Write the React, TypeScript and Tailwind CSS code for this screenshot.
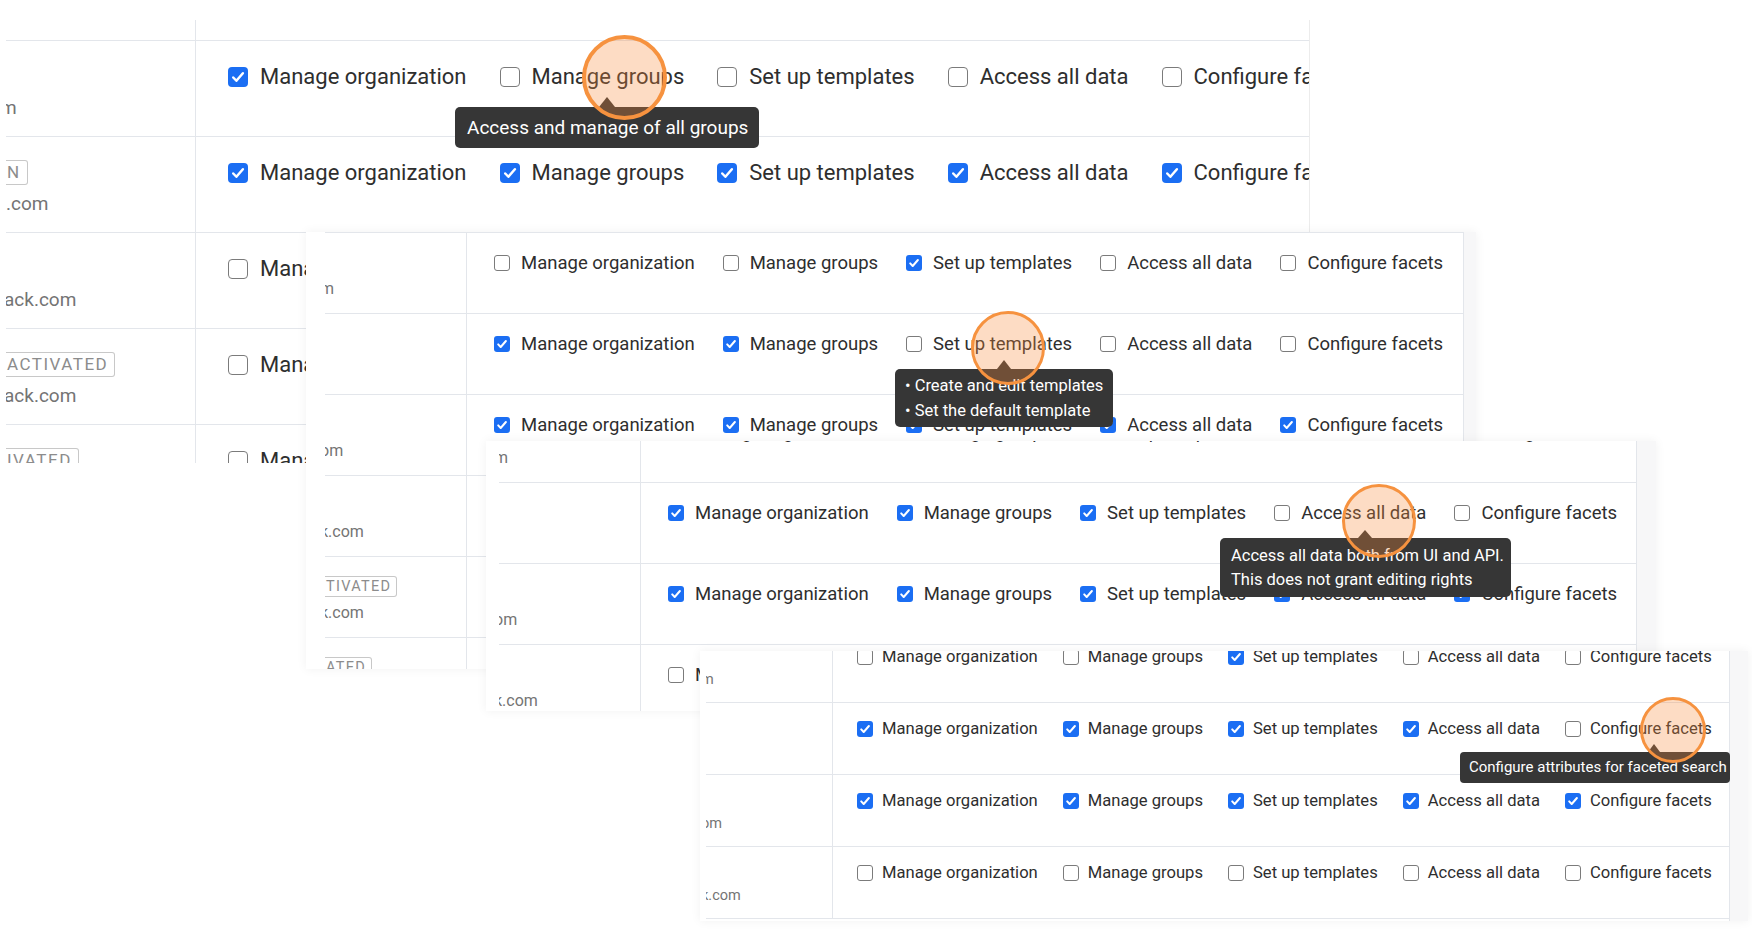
const LABELS = ['Manage organization', 'Manage groups', 'Set up templates', 'Access all data', 'Configure facets'];

type Size = {
  row: string;
  left: string;
  right: string;
  item: string;
  box: string;
  cell: string;
  badge: string;
};

type Cell = { badge?: string; email?: string; ml?: string };
type Row = { on: number[]; cell: Cell };

const LG: Size = {
  row: 'h-[96px]',
  left: 'w-[190px]',
  right: 'pl-[32px] pt-[26px] gap-x-[33px]',
  item: 'gap-[12px] text-[22px] leading-[20px]',
  box: 'w-[20px] h-[20px] rounded-[4px]',
  cell: 'pb-[16px] text-[19px] leading-[24px]',
  badge: 'text-[17px] leading-[23px] tracking-[1.5px] mb-[7px] pr-[6px]',
};

const MD: Size = {
  row: 'h-[81px]',
  left: 'w-[142px]',
  right: 'pl-[27px] pt-[22px] gap-x-[28px]',
  item: 'gap-[11px] text-[18.5px] leading-[16px]',
  box: 'w-[16px] h-[16px] rounded-[3px]',
  cell: 'pb-[14px] text-[16px] leading-[20px]',
  badge: 'text-[14.5px] leading-[19px] tracking-[1.3px] mb-[6px] pr-[5px]',
};

const SM: Size = {
  row: 'h-[72px]',
  left: 'w-[127px]',
  right: 'pl-[24px] pt-[18px] gap-x-[25px]',
  item: 'gap-[9px] text-[16.6px] leading-[16px]',
  box: 'w-[16px] h-[16px] rounded-[3px]',
  cell: 'pb-[13px] text-[14.5px] leading-[18px]',
  badge: 'text-[13px] leading-[17px] tracking-[1.2px] mb-[5px] pr-[4px]',
};

const P1_ROWS: Row[] = [
  { on: [1, 0, 0, 0, 0], cell: { email: 'm', ml: '-ml-[6px]' } },
  { on: [1, 1, 1, 1, 1], cell: { badge: 'N', email: '.com' } },
  { on: [0, 0, 0, 0, 0], cell: { email: 'ack.com', ml: '-ml-[2px]' } },
  { on: [0, 0, 0, 0, 0], cell: { badge: 'ACTIVATED', email: 'ack.com', ml: '-ml-[2px]' } },
  { on: [0, 0, 0, 0, 0], cell: { badge: 'IVATED', email: 'ack.com', ml: '-ml-[2px]' } },
];

const P2_ROWS: Row[] = [
  { on: [0, 0, 1, 0, 0], cell: { email: 'm', ml: '-ml-[5px]' } },
  { on: [1, 1, 0, 0, 0], cell: {} },
  { on: [1, 1, 1, 1, 1], cell: { email: 'om', ml: '-ml-[5px]' } },
  { on: [1, 1, 1, 1, 1], cell: { email: 'k.com', ml: '-ml-[5px]' } },
  { on: [1, 1, 1, 1, 1], cell: { badge: 'TIVATED', email: 'k.com', ml: '-ml-[5px]' } },
  { on: [0, 0, 0, 0, 0], cell: { badge: 'ATED', email: 'k.com', ml: '-ml-[5px]' } },
];

const P3_ROWS: Row[] = [
  { on: [0, 0, 1, 0, 0], cell: { email: 'm', ml: '-ml-[5px]' } },
  { on: [1, 1, 1, 0, 0], cell: {} },
  { on: [1, 1, 1, 1, 1], cell: { email: 'om', ml: '-ml-[5px]' } },
  { on: [0, 0, 0, 0, 0], cell: { email: 'k.com', ml: '-ml-[5px]' } },
];

const P4_ROWS: Row[] = [
  { on: [0, 0, 1, 0, 0], cell: { email: 'm', ml: '-ml-[5px]' } },
  { on: [1, 1, 1, 1, 0], cell: {} },
  { on: [1, 1, 1, 1, 1], cell: { email: 'om', ml: '-ml-[5px]' } },
  { on: [0, 0, 0, 0, 0], cell: { email: 'k.com', ml: '-ml-[5px]' } },
];

function Box({ s, checked }: { s: Size; checked: boolean }) {
  return checked ? (
    <span className={`${s.box} shrink-0 bg-[#1b6ef3] flex items-center justify-center`}>
      <svg viewBox="0 0 16 16" className="w-full h-full">
        <path d="M4.2 8.4l2.5 2.6L11.9 5" fill="none" stroke="white" strokeWidth="2" strokeLinecap="round" strokeLinejoin="round" />
      </svg>
    </span>
  ) : (
    <span className={`${s.box} shrink-0 bg-white border-[1.5px] border-[#7b7b7b]`} />
  );
}

function TableRow({ s, row }: { s: Size; row: Row }) {
  const { cell } = row;
  return (
    <div className={`${s.row} flex border-b border-[#e3e6eb]`}>
      <div className={`${s.left} ${s.cell} shrink-0 border-r border-[#e3e6eb] overflow-hidden flex flex-col justify-end items-start whitespace-nowrap text-[#747474]`}>
        {cell.badge && (
          <span className={`${s.badge} pl-[1px] border border-l-0 border-[#c8c8c8] rounded-r-[3px] text-[#8c8c8c]`}>
            {cell.badge}
          </span>
        )}
        {cell.email && <span className={cell.ml}>{cell.email}</span>}
      </div>
      <div className={`${s.right} flex flex-nowrap items-start whitespace-nowrap text-[#2e2e2e]`}>
        {LABELS.map((label, i) => (
          <div key={label} className={`${s.item} shrink-0 flex items-center`}>
            <Box s={s} checked={row.on[i] === 1} />
            <span>{label}</span>
          </div>
        ))}
      </div>
    </div>
  );
}

export default function App() {
  return (
    <div className="relative w-[1752px] h-[933px] overflow-hidden bg-white font-[Roboto,sans-serif]">
      {/* panel 1 - largest crop */}
      <div className="absolute left-[6px] top-[20px] w-[1304px] h-[443px] overflow-hidden bg-white border-r border-[#ececec]">
        <div className="flex h-[21px] border-b border-[#e3e6eb]">
          <div className="w-[190px] shrink-0 border-r border-[#e3e6eb]" />
        </div>
        {P1_ROWS.map((r, i) => (
          <TableRow key={i} s={LG} row={r} />
        ))}
      </div>

      {/* panel 2 */}
      <div className="absolute left-[306px] top-[232px] w-[1170px] h-[437px] overflow-hidden bg-white pl-[19px] flex shadow-[0_0_10px_rgba(0,0,0,0.06)]">
        <div className="w-[1139px] shrink-0 border-t border-r border-[#e3e6eb] overflow-hidden">
          {P2_ROWS.map((r, i) => (
            <TableRow key={i} s={MD} row={r} />
          ))}
        </div>
        <div className="w-[12px] shrink-0 bg-[#f7f7f8]" />
      </div>

      {/* panel 3 */}
      <div className="absolute left-[486px] top-[441px] w-[1170px] h-[270px] overflow-hidden bg-white pl-[13px] flex shadow-[0_0_10px_rgba(0,0,0,0.06)]">
        <div className="w-[1138px] shrink-0 border-r border-[#e3e6eb] overflow-hidden">
          <div className="-mt-[39px]">
            {P3_ROWS.map((r, i) => (
              <TableRow key={i} s={MD} row={r} />
            ))}
          </div>
        </div>
        <div className="w-[19px] shrink-0 bg-[#f7f7f8]" />
      </div>

      {/* panel 4 */}
      <div className="absolute left-[700px] top-[651px] w-[1048px] h-[270px] overflow-hidden bg-white pl-[6px] flex shadow-[0_0_10px_rgba(0,0,0,0.06)]">
        <div className="w-[1024px] shrink-0 border-r border-[#e3e6eb] overflow-hidden">
          <div className="-mt-[20px]">
            {P4_ROWS.map((r, i) => (
              <TableRow key={i} s={SM} row={r} />
            ))}
          </div>
        </div>
        <div className="w-[18px] shrink-0 bg-[#f7f7f8]" />
      </div>

      {/* tooltips */}
      <div className="absolute left-[455px] top-[107px] w-[304px] h-[41px] rounded-[5px] bg-[#363636] text-white text-[19px] leading-[41px] pl-[12px] whitespace-nowrap">
        <span className="absolute -top-[10px] left-[144px] w-0 h-0 border-l-[8px] border-r-[8px] border-b-[10px] border-l-transparent border-r-transparent border-b-[#363636]" />
        Access and manage of all groups
      </div>

      <div className="absolute left-[895px] top-[369px] w-[218px] h-[58px] rounded-[5px] bg-[#363636] text-white text-[16.5px] leading-[25px] px-[10px] py-[4px] whitespace-nowrap">
        <span className="absolute -top-[9px] left-[102px] w-0 h-0 border-l-[7px] border-r-[7px] border-b-[9px] border-l-transparent border-r-transparent border-b-[#363636]" />
        <div>• Create and edit templates</div>
        <div>• Set the default template</div>
      </div>

      <div className="absolute left-[1220px] top-[538px] w-[291px] h-[59px] rounded-[5px] bg-[#363636] text-white text-[16.5px] leading-[24px] px-[11px] pt-[6px] whitespace-nowrap">
        <span className="absolute -top-[8px] left-[138px] w-0 h-0 border-l-[7px] border-r-[7px] border-b-[8px] border-l-transparent border-r-transparent border-b-[#363636]" />
        <div>Access all data both from UI and API.</div>
        <div>This does not grant editing rights</div>
      </div>

      <div className="absolute left-[1460px] top-[752px] w-[270px] h-[31px] rounded-[4px] bg-[#363636] text-white text-[15px] leading-[31px] px-[9px] whitespace-nowrap">
        <span className="absolute -top-[8px] left-[188px] w-0 h-0 border-l-[6px] border-r-[6px] border-b-[8px] border-l-transparent border-r-transparent border-b-[#363636]" />
        Configure attributes for faceted search
      </div>

      {/* click highlights */}
      <div className="absolute left-[582px] top-[35px] w-[85px] h-[85px] rounded-full border-[4px] border-[#f6923f] bg-[rgba(247,140,60,0.3)]" />
      <div className="absolute left-[971px] top-[311px] w-[74px] h-[74px] rounded-full border-[3px] border-[#f6923f] bg-[rgba(247,140,60,0.3)]" />
      <div className="absolute left-[1342px] top-[484px] w-[74px] h-[74px] rounded-full border-[3px] border-[#f6923f] bg-[rgba(247,140,60,0.3)]" />
      <div className="absolute left-[1640px] top-[697px] w-[66px] h-[66px] rounded-full border-[3px] border-[#f6923f] bg-[rgba(247,140,60,0.3)]" />
    </div>
  );
}
